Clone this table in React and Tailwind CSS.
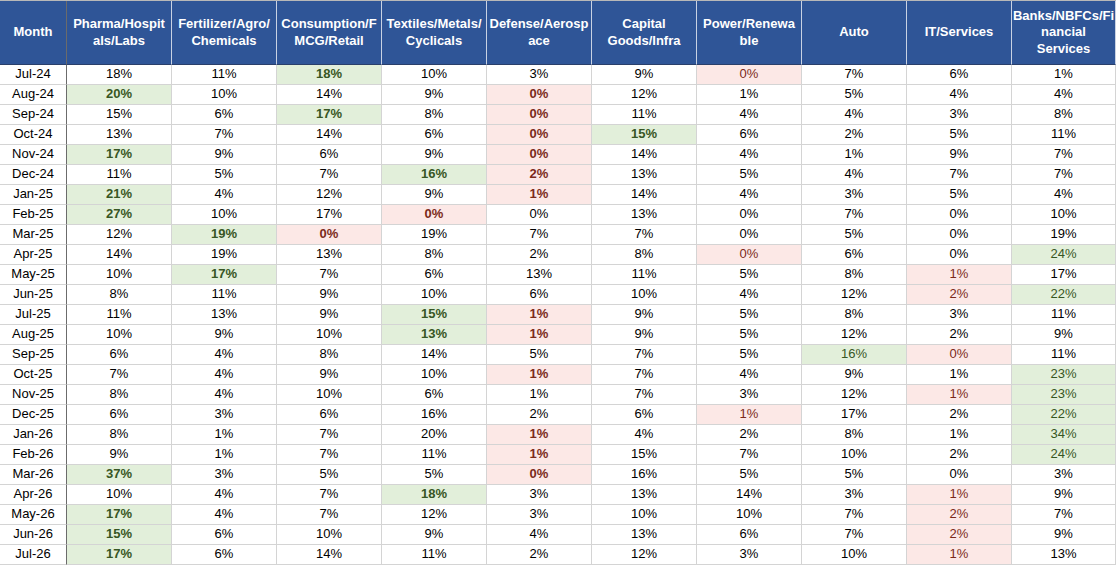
import React from 'react';

const headers = [
  ['Month'],
  ['Pharma/Hospit', 'als/Labs'],
  ['Fertilizer/Agro/', 'Chemicals'],
  ['Consumption/F', 'MCG/Retail'],
  ['Textiles/Metals/', 'Cyclicals'],
  ['Defense/Aerosp', 'ace'],
  ['Capital', 'Goods/Infra'],
  ['Power/Renewa', 'ble'],
  ['Auto'],
  ['IT/Services'],
  ['Banks/NBFCs/Fi', 'nancial', 'Services'],
];

// g = green fill, p = pink fill, trailing B = bold
const rows = [
  ['Jul-24', '18', '11', '18gB', '10', '3', '9', '0p', '7', '6', '1'],
  ['Aug-24', '20gB', '10', '14', '9', '0pB', '12', '1', '5', '4', '4'],
  ['Sep-24', '15', '6', '17gB', '8', '0pB', '11', '4', '4', '3', '8'],
  ['Oct-24', '13', '7', '14', '6', '0pB', '15gB', '6', '2', '5', '11'],
  ['Nov-24', '17gB', '9', '6', '9', '0pB', '14', '4', '1', '9', '7'],
  ['Dec-24', '11', '5', '7', '16gB', '2pB', '13', '5', '4', '7', '7'],
  ['Jan-25', '21gB', '4', '12', '9', '1pB', '14', '4', '3', '5', '4'],
  ['Feb-25', '27gB', '10', '17', '0pB', '0', '13', '0', '7', '0', '10'],
  ['Mar-25', '12', '19gB', '0pB', '19', '7', '7', '0', '5', '0', '19'],
  ['Apr-25', '14', '19', '13', '8', '2', '8', '0p', '6', '0', '24g'],
  ['May-25', '10', '17gB', '7', '6', '13', '11', '5', '8', '1p', '17'],
  ['Jun-25', '8', '11', '9', '10', '6', '10', '4', '12', '2p', '22g'],
  ['Jul-25', '11', '13', '9', '15gB', '1pB', '9', '5', '8', '3', '11'],
  ['Aug-25', '10', '9', '10', '13gB', '1pB', '9', '5', '12', '2', '9'],
  ['Sep-25', '6', '4', '8', '14', '5', '7', '5', '16g', '0p', '11'],
  ['Oct-25', '7', '4', '9', '10', '1pB', '7', '4', '9', '1', '23g'],
  ['Nov-25', '8', '4', '10', '6', '1', '7', '3', '12', '1p', '23g'],
  ['Dec-25', '6', '3', '6', '16', '2', '6', '1p', '17', '2', '22g'],
  ['Jan-26', '8', '1', '7', '20', '1pB', '4', '2', '8', '1', '34g'],
  ['Feb-26', '9', '1', '7', '11', '1pB', '15', '7', '10', '2', '24g'],
  ['Mar-26', '37gB', '3', '5', '5', '0pB', '16', '5', '5', '0', '3'],
  ['Apr-26', '10', '4', '7', '18gB', '3', '13', '14', '3', '1p', '9'],
  ['May-26', '17gB', '4', '7', '12', '3', '10', '10', '7', '2p', '7'],
  ['Jun-26', '15gB', '6', '10', '9', '4', '13', '6', '7', '2p', '9'],
  ['Jul-26', '17gB', '6', '14', '11', '2', '12', '3', '10', '1p', '13'],
];

const Cell = ({ value }) => {
  const num = value.match(/^\d+/)[0];
  const green = value.includes('g');
  const pink = value.includes('p');
  const bold = value.includes('B');
  let cls = 'bg-white text-black';
  if (green) cls = 'bg-[#e2efda] text-[#375623]';
  if (pink) cls = 'bg-[#fce8e6] text-[#7b2a1a]';
  return (
    <div
      className={`h-5 flex items-end justify-center pb-px border-r border-b border-[#d4d4d4] ${cls} ${bold ? 'font-bold' : ''}`}
    >
      {num}%
    </div>
  );
};

export default function App() {
  return (
    <div
      className="w-[1116px] h-[565px] overflow-hidden bg-white text-[13px]"
      style={{ fontFamily: '"Liberation Sans", Arial, sans-serif' }}
    >
      <div className="grid grid-cols-[67px_repeat(9,105px)_104px] border-t border-[#b8b8b8]">
        {headers.map((lines, i) => (
          <div
            key={i}
            className={`h-[64px] flex flex-col items-center justify-center text-center leading-[16.5px] font-bold text-white bg-[#2f5597] border-b border-[#2a3f6a] whitespace-nowrap ${
              i === 0 ? 'border-r border-r-[#6b6b6b]' : 'border-r border-r-[#c9d2e3]'
            }`}
          >
            {lines.map((l) => (
              <span key={l}>{l}</span>
            ))}
          </div>
        ))}
        {rows.map((r) => (
          <React.Fragment key={r[0]}>
            <div className="h-5 flex items-end justify-center pb-px border-b border-[#d4d4d4] border-r border-r-[#6b6b6b] text-black">
              {r[0]}
            </div>
            {r.slice(1).map((v, j) => (
              <Cell key={j} value={v} />
            ))}
          </React.Fragment>
        ))}
      </div>
    </div>
  );
}
